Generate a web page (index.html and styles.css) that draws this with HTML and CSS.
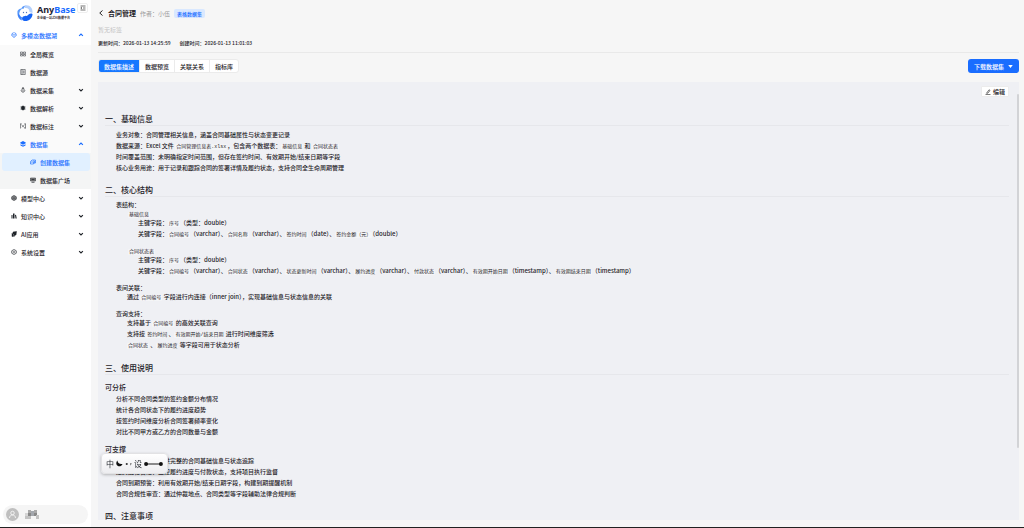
FILE: index.html
```html
<!DOCTYPE html>
<html lang="zh-CN">
<head>
<meta charset="utf-8">
<title>AnyBase - 合同管理</title>
<link rel="stylesheet" href="styles.css">
</head>
<body>
<svg class="defs" aria-hidden="true">
  <symbol id="down" viewBox="0 0 8 8"><path d="M1.5 2.7 4 5.2 6.5 2.7" fill="none" stroke="currentColor" stroke-width="1.5"/></symbol>
  <symbol id="up" viewBox="0 0 8 8"><path d="M1.5 5.3 4 2.8 6.5 5.3" fill="none" stroke="currentColor" stroke-width="1.5"/></symbol>
</svg>
<div class="app">
  <aside class="sidebar">
    <div class="brand">
      <svg class="logo" viewBox="0 0 36 36">
        <path d="M11 9C12 5 16 3 20 4c-3 1-4 3-4 5-5 0-8 3-9 8-1 4-1 5 0 7C0 18 2 10 11 9z" fill="#5b9bfa"/>
        <path d="M18 3c9-2 16 5 15 15l-6-2c0-6-4-9-9-8-1-2-1-3 0-5z" fill="#b4d0fc"/>
        <path d="M33 20c0 9-8 15-16 14-5-1-6-5-4-8 3-3 7-1 10-3 3-3 6-5 10-3z" fill="#1664f5"/>
        <path d="M3 19c3-1 4 2 5 4s3 3 4 4c-1 2-1 4 0 6-6-2-9-8-9-14z" fill="#3f83f8"/>
        <circle cx="15" cy="17" r="1.3" fill="#5577bb"/><circle cx="21" cy="17" r="1.3" fill="#5577bb"/>
      </svg>
      <div class="brand-text">
        <div class="brand-name">Any<span class="accent">Base</span></div>
        <div class="slogan">企业级一站式AI数据平台</div>
      </div>
      <button class="collapse" aria-label="收起菜单"><svg class="icon" viewBox="0 0 12 12"><path d="M1 2h10M6 6h5M1 10h10M4 4 1.500 6 4 8" fill="none" stroke="#333" stroke-width="1.400"/></svg></button>
    </div>
    <nav class="menu">
      <a class="item root current" href="#"><svg class="icon" viewBox="0 0 12 12"><path d="M6 1l4 2v5l-4 3-4-3V3zM2 3l4 3 4-3M6 6v5M0 6h3M9 6h3" fill="none" stroke="currentColor"/></svg><span class="label">多模态数据湖</span><svg class="caret"><use href="#up"/></svg></a>
      <div class="sub">
        <a class="item" href="#"><svg class="icon" viewBox="0 0 12 12"><path d="M1 2h4v3.500H1zM7 2h4v3.500H7zM1 7h4v3H1zM7 7h4v3H7z" fill="none" stroke="currentColor"/></svg><span class="label">全局概览</span></a>
        <a class="item" href="#"><svg class="icon" viewBox="0 0 12 12"><path d="M1.500 1h9v10h-9zM4 1v10M5.500 4H9M5.500 6H9M5.500 8H9" fill="none" stroke="currentColor"/></svg><span class="label">数据源</span></a>
        <a class="item" href="#"><svg class="icon" viewBox="0 0 12 12"><path d="M6 1v7M4 4l2-3 2 3M3 5a3.500 3.500 0 1 0 6 0" fill="none" stroke="currentColor" stroke-width="1.300"/></svg><span class="label">数据采集</span><svg class="caret"><use href="#down"/></svg></a>
        <a class="item" href="#"><svg class="icon" viewBox="0 0 12 12"><circle cx="6" cy="6" r="3.800" fill="currentColor"/><path d="M1 4h10M1 8h10M6 1v10" stroke="currentColor" stroke-width="1.500"/></svg><span class="label">数据解析</span><svg class="caret"><use href="#down"/></svg></a>
        <a class="item" href="#"><svg class="icon" viewBox="0 0 12 12"><path d="M1 1v10M11 1v10M1 2h3M8 2h3M8 10h3M3.500 4 8.500 9M8.500 4 4 8.500" fill="none" stroke="currentColor"/></svg><span class="label">数据标注</span><svg class="caret"><use href="#down"/></svg></a>
        <a class="item current" href="#"><svg class="icon" viewBox="0 0 12 12"><path d="M6 0l5.500 3v1.500L6 7.500.5 4.500V3z" fill="currentColor"/><path d="M1 6.500l5 2.500 5-2.500V9l-5 2.500L1 9z" fill="currentColor"/></svg><span class="label">数据集</span><svg class="caret"><use href="#up"/></svg></a>
        <div class="sub deep">
          <a class="item current selected" href="#"><svg class="icon" viewBox="0 0 12 12"><path d="M4 2h7v6H9M4 2 1 5v5h6V6H2M9 4v5M6 4h3" fill="none" stroke="currentColor" stroke-width="1.300"/></svg><span class="label">创建数据集</span></a>
          <a class="item" href="#"><svg class="icon" viewBox="0 0 12 12"><path d="M1 2h10v6H1z" fill="#888" stroke="currentColor"/><path d="M3 10.500h6M3 5h6" stroke="currentColor" stroke-width="1.500"/></svg><span class="label">数据集广场</span></a>
        </div>
      </div>
      <a class="item root" href="#"><svg class="icon" viewBox="0 0 12 12"><path d="M6 1l4.500 2.500v5L6 11 1.500 8.500v-5z" fill="#999" stroke="currentColor" stroke-width="1.300"/><path d="M6 3v6M4 5v3M8 5v3" stroke="currentColor"/></svg><span class="label">模型中心</span><svg class="caret"><use href="#down"/></svg></a>
      <a class="item root" href="#"><svg class="icon" viewBox="0 0 12 12"><path d="M1 4h2v7H1zM4 1h3v10H4zM8 4l2-.5 1.500 7.500H9z" fill="currentColor"/></svg><span class="label">知识中心</span><svg class="caret"><use href="#down"/></svg></a>
      <a class="item root" href="#"><svg class="icon" viewBox="0 0 12 12"><path d="M4 2l7-1-1 7-6 1zM2 4v7l6-1" fill="currentColor" stroke="currentColor"/></svg><span class="label">AI应用</span><svg class="caret"><use href="#down"/></svg></a>
      <a class="item root" href="#"><svg class="icon" viewBox="0 0 12 12"><path d="M6 1l4.500 2.500v5L6 11 1.500 8.500v-5z" fill="none" stroke="currentColor" stroke-width="1.300"/><circle cx="6" cy="6" r="1.800" fill="none" stroke="currentColor"/></svg><span class="label">系统设置</span><svg class="caret"><use href="#down"/></svg></a>
    </nav>
    <div class="user">
      <svg class="avatar" viewBox="0 0 26 26"><circle cx="13" cy="13" r="13" fill="#bfbfbf"/><circle cx="13" cy="10" r="3.500" fill="none" stroke="#fff" stroke-width="1.500"/><path d="M7 20c0-8 12-8 12 0" fill="none" stroke="#fff" stroke-width="1.500"/></svg>
      <svg class="mosaic" viewBox="0 0 14 9"><path d="M0 3h3v3H0z" fill="#d5d5d5"/><path d="M3 0h3v3H3zM9 0h3v3H9z" fill="#aaa"/><path d="M3 3h3v3H3zM9 3h3v3H9z" fill="#888"/><path d="M6 1h3v5H6z" fill="#a3a7ad"/><path d="M0 6h6v3H0zM11 5h3v4h-3z" fill="#c3c3c3"/></svg>
    </div>
  </aside>

  <main class="main">
    <header class="page-head">
      <div class="title-row">
        <button class="back" aria-label="返回"><svg class="icon" viewBox="0 0 12 12"><path d="M9 1 3.500 6 9 11" fill="none" stroke="#222" stroke-width="2"/></svg></button>
        <h1 class="title">合同管理</h1>
        <span class="author">作者：小伍</span>
        <span class="tag">表格数据集</span>
      </div>
      <div class="no-tag">暂无标签</div>
      <div class="dates"><span>更新时间：2026-01-13 14:25:59</span><span>创建时间：2026-01-13 11:01:03</span></div>
    </header>
    <div class="toolbar">
      <div class="tabs">
        <button class="tab active">数据集描述</button><button class="tab">数据预览</button><button class="tab">关联关系</button><button class="tab">指标库</button>
      </div>
      <button class="download">下载数据集<svg class="tri" viewBox="0 0 6 4"><path d="M0 0h6L3 4z" fill="#fff"/></svg></button>
    </div>
    <section class="panel">
      <div class="panel-head"><button class="edit"><svg class="icon" viewBox="0 0 12 12"><path d="M1 11h10M3 8.500 8 1.500l2 1.500-4.500 5.500z" fill="none" stroke="#222" stroke-width="1.200"/></svg>编辑</button></div>
      <article class="doc">
        <h2>一、基础信息</h2>
        <ul class="list">
          <li>业务对象：合同管理相关信息，涵盖合同基础属性与状态变更记录</li>
          <li>数据来源：Excel 文件 <code>合同管理信息表.xlsx</code>，包含两个数据表：<code>基础信息</code> 和 <code>合同状态表</code></li>
          <li>时间覆盖范围：未明确指定时间范围，但存在签约时间、有效期开始/结束日期等字段</li>
          <li>核心业务用途：用于记录和跟踪合同的签署详情及履约状态，支持合同全生命周期管理</li>
        </ul>
        <h2>二、核心结构</h2>
        <div class="topics">
          <div class="topic">
            <p>表结构：</p>
            <p class="table-name"><code>基础信息</code></p>
            <ul class="fields">
              <li>主键字段：<code>序号</code>（类型：double）</li>
              <li>关键字段：<code>合同编号</code>（varchar）、<code>合同名称</code>（varchar）、<code>签约时间</code>（date）、<code>签约金额（元）</code>（double）</li>
            </ul>
          </div>
          <div class="topic">
            <p class="table-name"><code>合同状态表</code></p>
            <ul class="fields">
              <li>主键字段：<code>序号</code>（类型：double）</li>
              <li>关键字段：<code>合同编号</code>（varchar）、<code>合同状态</code>（varchar）、<code>状态更新时间</code>（varchar）、<code>履约进度</code>（varchar）、<code>付款状态</code>（varchar）、<code>有效期开始日期</code>（timestamp）、<code>有效期结束日期</code>（timestamp）</li>
            </ul>
          </div>
          <div class="topic">
            <p>表间关联：</p>
            <ul class="notes"><li>通过 <code>合同编号</code> 字段进行内连接（inner join），实现基础信息与状态信息的关联</li></ul>
          </div>
          <div class="topic">
            <p>查询支持：</p>
            <ul class="notes">
              <li>支持基于 <code>合同编号</code> 的高效关联查询</li>
              <li>支持按 <code>签约时间</code>、<code>有效期开始/结束日期</code> 进行时间维度筛选</li>
              <li><code>合同状态</code> 、<code>履约进度</code> 等字段可用于状态分析</li>
            </ul>
          </div>
        </div>
        <h2>三、使用说明</h2>
        <h3>可分析</h3>
        <ul class="list">
          <li>分析不同合同类型的签约金额分布情况</li>
          <li>统计各合同状态下的履约进度趋势</li>
          <li>按签约时间维度分析合同签署频率变化</li>
          <li>对比不同甲方或乙方的合同数量与金额</li>
        </ul>
        <h3>可支撑</h3>
        <ul class="list">
          <li>合同全景视图：提供完整的合同基础信息与状态追踪</li>
          <li>履约过程管理：监控履约进度与付款状态，支持项目执行监督</li>
          <li>合同到期预警：利用有效期开始/结束日期字段，构建到期提醒机制</li>
          <li>合同合规性审查：通过仲裁地点、合同类型等字段辅助法律合规判断</li>
        </ul>
        <h2>四、注意事项</h2>
      </article>
      <div class="thumb"></div>
    </section>
  </main>
</div>
<div class="ime">
  <span>中</span>
  <svg class="moon" viewBox="0 0 14 14"><path d="M3 1c0 5 4 8 10 7-2 6-10 6-12 1-1-3 0-6 2-8z" fill="#111"/></svg>
  <svg class="dots" viewBox="0 0 8 6"><circle cx="2" cy="3" r="1.200" fill="#333"/><path d="M6 2h1.500L6.500 5z" fill="#333"/></svg>
  <span>设</span>
  <svg class="link" viewBox="0 0 20 6"><path d="M2 3h16" stroke="#111"/><circle cx="2.200" cy="3" r="2.100" fill="#111"/><circle cx="17.800" cy="3" r="2.100" fill="#111"/></svg>
</div>
</body>
</html>
```
FILE: styles.css
```css
* { box-sizing: border-box; }
body, h1, h2, h3, p, ul { margin: 0; padding: 0; }
body {
  font-family: "Noto Sans CJK SC", "Noto Sans", sans-serif;
  font-size: 6px;
  line-height: 9px;
  color: #1f2329;
  background: #f6f6f6;
}
button { font: inherit; color: inherit; border: 0; padding: 0; margin: 0; background: none; }
a { color: inherit; text-decoration: none; }
ul { list-style: none; }
svg { display: block; flex: none; }
.defs { position: absolute; width: 0; height: 0; }
.icon { width: 6px; height: 6px; }

.app { display: flex; height: 100vh; border-bottom: 1px solid #222; }

/* sidebar */
.sidebar { flex: 0 0 91px; display: flex; flex-direction: column; background: #fff; }
.brand { display: flex; align-items: flex-start; height: 26px; padding: 3px 3px 0 16px; }
.logo { width: 18px; height: 18px; margin-top: 1px; }
.brand-text { flex: 1; padding-left: 3px; white-space: nowrap; }
.brand-name { font: 700 9px/13px "Noto Sans", sans-serif; color: #1c2233; }
.accent { color: #1a6dff; }
.slogan { font-size: 3px; line-height: 5px; font-weight: 700; }
.collapse { display: grid; place-items: center; width: 11px; height: 10px; background: #fff; border: 1px solid #eee; border-radius: 2px; }
.menu { flex: 1; font-weight: 500; }
.item { display: flex; align-items: center; gap: 4px; height: 18px; padding: 0 7px 0 20px; }
.item.root { padding-left: 11px; }
.label { flex: 1; }
.caret { width: 6px; height: 6px; }
.current { color: #1a6dff; }
.sub { margin-top: 1px; background: #fafafa; }
.sub.deep { margin-top: 0; background: #f4f5f5; }
.deep .item { padding-left: 30px; }
.deep .selected { margin: 0 1px 0 2px; padding-left: 28px; background: #e1f0ff; border-radius: 3px; }
.user { display: flex; align-items: center; gap: 6px; height: 19px; margin: 0 3px 3px; padding-left: 3px; background: #f5f5f5; border-radius: 10px; }
.avatar { width: 13px; height: 13px; }
.mosaic { width: 14px; height: 9px; }

/* main column */
.main { flex: 1; min-width: 0; display: flex; flex-direction: column; padding: 0 5px 7px 7px; }
.page-head { height: 53px; padding-top: 8px; border-bottom: 1px solid #e9e9e9; }
.title-row { display: flex; align-items: center; height: 10px; }
.back { margin-right: 4px; }
.title { font-size: 7px; line-height: 10px; font-weight: 700; margin-right: 4px; }
.author { color: #999; margin-right: 4px; }
.tag { padding: 0 3px; font-size: 5px; font-weight: 500; color: #1a6dff; background: #d9e8ff; border-radius: 2px; }
.no-tag { margin-top: 7px; color: #c4c4c4; }
.dates { display: flex; gap: 9px; margin-top: 4px; font-size: 5px; font-weight: 500; }
.toolbar { display: flex; justify-content: space-between; margin: 6px 0 9px; }
.tabs { display: flex; background: #fff; border: 1px solid #ebebeb; border-radius: 3px; overflow: hidden; }
.tab { padding: 0 5px; height: 12px; font-weight: 500; border-left: 1px solid #ebebeb; }
.tab.active { color: #fff; background: #1677ff; border: 0; }
.download { display: flex; align-items: center; gap: 4px; height: 14px; padding: 0 6px; color: #fff; font-weight: 500; background: #1a6dff; border-radius: 3px; }
.tri { width: 5px; height: 3px; }

/* document */
.panel { position: relative; flex: 1; min-height: 0; overflow: hidden; padding: 4px 10px 0 7px; background: #eff0f4; }
.panel-head { display: flex; justify-content: flex-end; }
.edit { display: flex; align-items: center; gap: 2px; height: 11px; padding: 0 3px; font-weight: 500; background: #fff; border: 1px solid #ececec; border-radius: 1px; }
.thumb { position: absolute; right: 0; top: 12px; width: 2px; height: 354px; background: #d2d3d6; border-radius: 1px; }
.doc { padding-top: 5px; font-weight: 500; }
.doc h2 { margin-top: 10px; font-size: 8px; line-height: 13px; font-weight: 500; border-bottom: 1px solid #e6e7eb; }
.doc h3 { margin-top: 8px; font-size: 7px; line-height: 8px; font-weight: 500; }
.list { padding-left: 11px; line-height: 11px; margin-top: 3px; }
.doc h3 + .list { margin-top: 2px; }
.topics { display: grid; gap: 8px; padding: 3px 0 2px 11px; }
.table-name { padding-left: 12px; }
.fields { display: grid; gap: 2px; padding-left: 22px; }
.notes { display: grid; gap: 2px; padding-left: 11px; }
code { font-family: "Liberation Mono", "Noto Sans CJK SC", monospace; font-size: 5px; line-height: 6px; font-weight: 400; padding: 0 1px; background: #f4f5f7; border-radius: 1px; }

/* floating input-method bar */
.ime { position: fixed; left: 101px; top: 453px; display: flex; align-items: center; gap: 2px; height: 21px; padding: 0 4px; font-size: 8px; background: linear-gradient(#fff, #ededf0); border: 1px solid #e2e2e4; border-radius: 4px; box-shadow: 0 1px 3px rgba(0, 0, 0, .25); }
.moon { width: 7px; height: 7px; }
.dots { width: 7px; height: 6px; }
.link { width: 19px; height: 6px; }
```
